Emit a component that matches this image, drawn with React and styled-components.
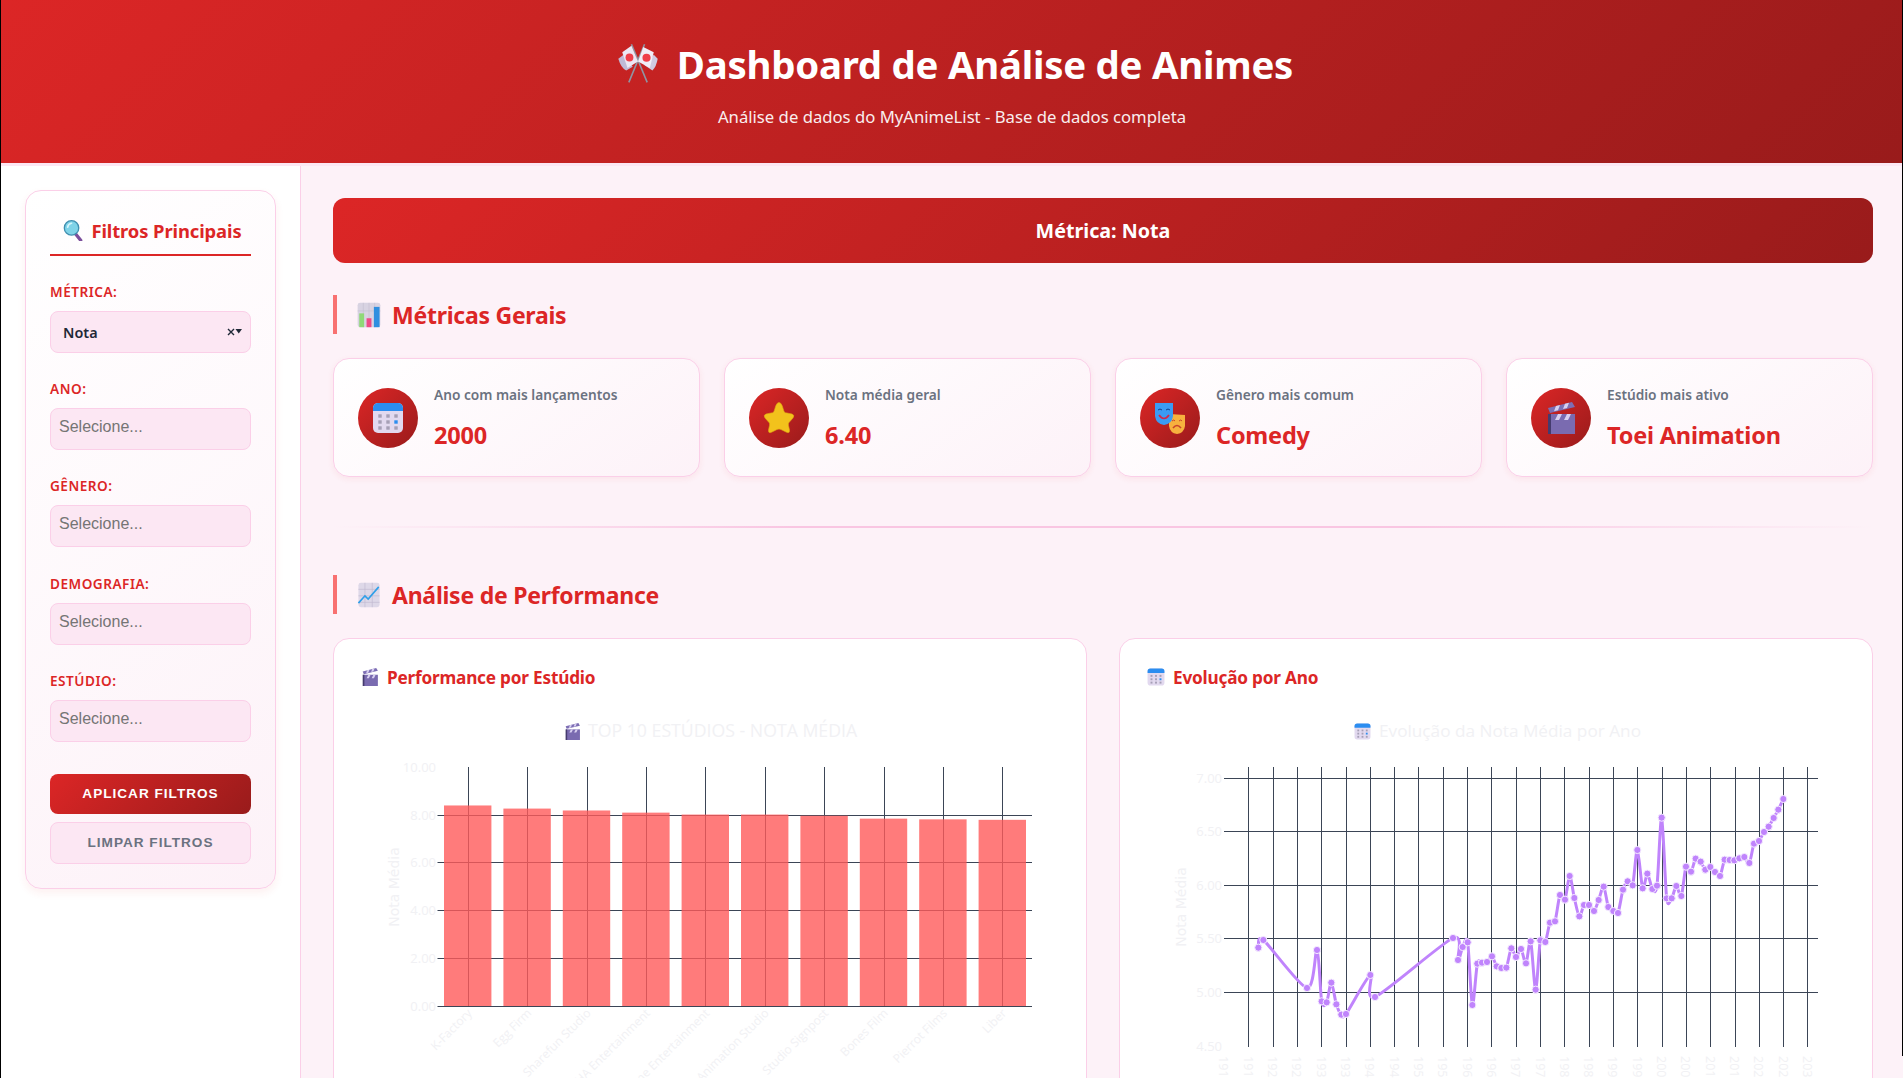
import React from 'react';
import styled, { createGlobalStyle } from 'styled-components';

const GlobalStyle = createGlobalStyle`
    html, body {
        margin: 0;
        padding: 0;
        overflow: hidden;
        background: #fdf2f8;
    }
    body {
        font-family: "Noto Sans", "Open Sans", sans-serif;
    }
    * {
        box-sizing: border-box;
    }
`;

const Page = styled.div`
    position: relative;
    height: 1078px;
    overflow: hidden;
    padding-left: 1px;
`;

const Edge = styled.div`
    position: absolute;
    top: 0;
    ${props => props.$side}: 0;
    width: 1px;
    height: ${props => props.$length}px;
    background: #000;
    z-index: 5;
`;

const Header = styled.header`
    height: 166px;
    padding-top: 37px;
    text-align: center;
    color: #fff;
    background: linear-gradient(135deg, #dc2626, #991b1b);
    border-bottom: 3px solid #fce7f3;
`;

const HeaderTitle = styled.h1`
    display: flex;
    justify-content: center;
    align-items: center;
    gap: 18px;
    margin: 0;
    height: 54px;
    padding-left: 6px;
    font-size: 38.4px;
    font-weight: 700;
    letter-spacing: -0.25px;
`;

const HeaderSub = styled.p`
    margin: 14px 0 0;
    font-size: 16.7px;
    line-height: 24px;
    opacity: 0.92;
`;

const Body = styled.div`
    display: flex;
    height: 912px;
`;

const Sidebar = styled.aside`
    width: 300px;
    flex: none;
    padding: 24px;
    background: #fff;
    border-right: 1px solid #fbcfe8;
`;

const FilterCard = styled.div`
    height: 699px;
    padding: 24px;
    border: 1px solid #fbcfe8;
    border-radius: 16px;
    background: linear-gradient(145deg, #fff, #fdf2f8);
    box-shadow: 0 4px 8px rgba(220, 38, 38, 0.07);
`;

const FilterTitle = styled.h3`
    display: flex;
    justify-content: center;
    align-items: center;
    gap: 7px;
    margin: 0 0 26px;
    height: 41px;
    padding: 0 0 8px 4px;
    font-size: 18.4px;
    font-weight: 700;
    letter-spacing: -0.1px;
    color: #dc2626;
    border-bottom: 2px solid #dc2626;
`;

const Field = styled.div`
    margin-bottom: 26.2px;
`;

const FieldLabel = styled.label`
    display: block;
    margin-bottom: 10px;
    font-size: 13.6px;
    line-height: 19px;
    font-weight: 600;
    letter-spacing: 0.5px;
    text-transform: uppercase;
    color: #dc2626;
`;

const Select = styled.div`
    display: flex;
    align-items: center;
    justify-content: ${props => (props.$value ? 'space-between' : 'flex-start')};
    height: 42px;
    padding: ${props => (props.$value ? '0 7px 0 12px' : '0 8px 4px')};
    border: 1px solid #fbcfe8;
    border-radius: 8px;
    background: #fce7f3;
`;

const SelectValue = styled.span`
    font-size: 14.4px;
    font-weight: 600;
    color: #1f2937;
`;

const Placeholder = styled.span`
    font-family: "Liberation Sans", Arial, sans-serif;
    font-size: 16px;
    color: #757575;
`;

const Button = styled.button`
    display: block;
    width: 100%;
    height: ${props => (props.$primary ? 40 : 42)}px;
    margin-top: ${props => (props.$primary ? 32 : 8)}px;
    border: ${props => (props.$primary ? 'none' : '1px solid #fbcfe8')};
    border-radius: 8px;
    font-family: "Liberation Sans", Arial, sans-serif;
    font-size: 13.6px;
    font-weight: 700;
    letter-spacing: 1px;
    text-transform: uppercase;
    color: ${props => (props.$primary ? '#fff' : '#6b7280')};
    background: ${props => (props.$primary ? 'linear-gradient(135deg, #dc2626, #991b1b)' : '#fce7f3')};
`;

const Main = styled.main`
    flex: 1;
    min-width: 0;
    padding: 32px 30px 0 32px;
    background: #fdf2f8;
`;

const Banner = styled.div`
    display: flex;
    align-items: center;
    justify-content: center;
    height: 65px;
    margin-bottom: 32px;
    border-radius: 12px;
    font-size: 19.7px;
    font-weight: 700;
    color: #fff;
    background: linear-gradient(135deg, #dc2626, #991b1b);
`;

const SectionTitle = styled.h2`
    display: flex;
    align-items: center;
    gap: 10px;
    height: 39px;
    margin: 0 0 ${props => props.$after}px;
    padding-left: 19px;
    border-left: 4px solid #f87171;
    font-size: 23px;
    font-weight: 700;
    letter-spacing: -0.25px;
    color: #dc2626;
`;

const MetricGrid = styled.div`
    display: grid;
    grid-template-columns: repeat(4, 1fr);
    gap: 24px;
`;

const MetricCard = styled.div`
    display: flex;
    align-items: center;
    gap: 16px;
    height: 119px;
    padding: 0 24px;
    border: 1px solid #fbcfe8;
    border-radius: 16px;
    background: linear-gradient(145deg, #fff, #fdf2f8);
    box-shadow: 0 2px 6px rgba(220, 38, 38, 0.07);
`;

const MetricIcon = styled.div`
    display: flex;
    align-items: center;
    justify-content: center;
    flex: none;
    width: 60px;
    height: 60px;
    border-radius: 50%;
    background: linear-gradient(135deg, #dc2626, #991b1b);
`;

const MetricText = styled.div`
    display: flex;
    flex-direction: column;
    margin-top: 2px;
`;

const MetricLabel = styled.span`
    font-size: 13.7px;
    line-height: 18px;
    font-weight: 600;
    color: #6b7280;
`;

const MetricValue = styled.span`
    margin-top: 15px;
    font-size: 23.5px;
    line-height: 32px;
    font-weight: 700;
    letter-spacing: -0.2px;
    color: #dc2626;
`;

const Divider = styled.div`
    height: 2px;
    margin: 49px 0 47px;
    background: linear-gradient(90deg, transparent, #f9c6e2 30%, #f9c6e2 70%, transparent);
`;

const ChartGrid = styled.div`
    display: grid;
    grid-template-columns: 1fr 1fr;
    gap: 32px;
`;

const ChartCard = styled.section`
    height: 620px;
    padding: 24px;
    border: 1px solid #fbcfe8;
    border-radius: 16px;
    background: #fff;
`;

const ChartTitle = styled.h3`
    display: flex;
    align-items: center;
    gap: 8px;
    height: 28px;
    margin: 0 0 14px;
    padding-left: 3px;
    font-size: 17.2px;
    font-weight: 700;
    letter-spacing: -0.2px;
    color: #dc2626;
`;

const ChartSvg = styled.svg`
    display: block;
    width: 704px;
    height: 450px;
    overflow: hidden;
    font-family: "Open Sans", sans-serif;
`;

const Glyph = ({ size, children, x, y }) => (
    <svg width={size} height={size} x={x} y={y} viewBox="0 0 32 32">{children}</svg>
);

const FlagsEmoji = ({ size }) => (
    <Glyph size={size}>
        <path d="M21 1 L9 30" stroke="#8f95a3" strokeWidth="1.2" />
        <path d="M11 1 L23 30" stroke="#8f95a3" strokeWidth="1.2" />
        <path d="M1 12 L5 9 L12 18 L7 21 Q3 19 1 12Z" fill="#bfb9d6" />
        <path d="M4 7 L11 2 L16 14 L8 19Z" fill="#ece7f4" />
        <circle cx="9.5" cy="11" r="3" fill="#ef3f4a" />
        <path d="M31 12 L28 9 L21 17 L27 21 Q30 18 31 12Z" fill="#cfc9e0" />
        <path d="M20 3 L28 7 L25 19 L16 14Z" fill="#f1edf7" />
        <circle cx="22.5" cy="11.2" r="3.1" fill="#ef3f4a" />
    </Glyph>
);

const SearchEmoji = ({ size }) => (
    <Glyph size={size}>
        <path d="M19 21 L27 31" stroke="#7b4f9c" strokeWidth="5" strokeLinecap="round" />
        <circle cx="13" cy="12" r="11" fill="#7fd3e8" stroke="#3f8fb0" strokeWidth="2" />
        <path d="M7 11 Q8 6 13 5" stroke="#d6f4fb" strokeWidth="2.5" fill="none" strokeLinecap="round" />
    </Glyph>
);

const BarsEmoji = ({ size }) => (
    <Glyph size={size}>
        <rect x="2" y="1" width="28" height="30" rx="3" fill="#d8d3e2" />
        <path d="M2 11H30M16 1V31M9 1V31M23 1V31" stroke="#c3bdd0" strokeWidth="0.7" />
        <rect x="4" y="14" width="6" height="17" fill="#8fd977" />
        <rect x="13" y="20" width="6" height="11" fill="#ef4a85" />
        <rect x="22" y="6" width="7" height="25" fill="#2f8fe0" />
    </Glyph>
);

const CalendarEmoji = ({ size, x, y }) => (
    <Glyph size={size} x={x} y={y}>
        <rect x="1" y="1" width="30" height="30" rx="5" fill="#e2d9ef" />
        <path d="M1 9 V6 a5 5 0 0 1 5 -5 h20 a5 5 0 0 1 5 5 v3Z" fill="#2b8df0" />
        {[8, 16, 24].map(cx => [14, 20, 26].map(cy => (
            <rect key={`${cx}-${cy}`} x={cx - 1.7} y={cy - 1.7} width="3.4" height="3.4" fill={cx === 24 && cy === 20 ? '#2b8df0' : '#a69fb6'} />
        )))}
    </Glyph>
);

const StarEmoji = ({ size }) => (
    <Glyph size={size}>
        <path d="M16 0.5 Q18 0.5 19.3 4 L21 9.5 Q22 11 24 11 L29 12 Q32 13 30 16 L26 20.5 Q25 21.5 25.5 23.5 L26.5 28 Q27 32 23 30 L18 27.5 Q16 26.5 14 27.5 L9 30 Q5 32 5.5 28 L6.5 23.5 Q7 21.5 6 20.5 L2 16 Q0 13 3 12 L8 11 Q10 11 11 9.5 L12.7 4 Q14 0.5 16 0.5Z" fill="#f2c21c" stroke="#dfa810" strokeWidth="0.6" />
    </Glyph>
);

const MasksEmoji = ({ size }) => (
    <Glyph size={size}>
        <path d="M15 12 L31 13 V24 Q30 31 23 32 Q16 31 15 24Z" fill="#f7b13e" />
        <path d="M19 26 Q23 21 27 26" stroke="#c8442b" strokeWidth="1.6" fill="none" />
        <path d="M18 19 Q20 17 21 19 M25 19 Q27 17 28 19" stroke="#c8442b" strokeWidth="1" fill="none" />
        <path d="M1 1 L19 1 L19 14 Q18 22 10 23 Q2 22 1 14Z" fill="#3a9bf4" />
        <path d="M5 13 Q10 20 15 13" stroke="#d3274a" strokeWidth="1.7" fill="none" />
        <path d="M4 8 Q6 6 8 8 M12 8 Q14 6 16 8" stroke="#123c8c" strokeWidth="1" fill="none" />
    </Glyph>
);

const ClapperEmoji = ({ size, x, y }) => (
    <Glyph size={size} x={x} y={y}>
        <rect x="4" y="12" width="26" height="20" fill="#7a6bb0" />
        <rect x="3" y="12" width="3" height="20" fill="#453b6e" />
        <path d="M10 18 L13 12 H17 L14 18Z M19 18 L22 12 H26 L23 18Z" fill="#d8d0f0" />
        <path d="M3 6 L27 0 L30 5 L5 11Z" fill="#7d6eb4" />
        <path d="M9 9.3 L11 4 L15 3 L13 8.3Z M18 7 L20 1.7 L24 0.8 L22 6Z" fill="#d8d0f0" />
    </Glyph>
);

const TrendEmoji = ({ size }) => (
    <Glyph size={size}>
        <rect x="3" y="1" width="26" height="30" rx="3" fill="#ded8e8" />
        <path d="M3 9H29M3 17H29M3 25H29M11 1V31M20 1V31" stroke="#bfb8cf" strokeWidth="0.8" />
        <path d="M3 26 L11 17 L15 21 L28 6" stroke="#2f9fe8" strokeWidth="2" fill="none" />
    </Glyph>
);

const SelectArrows = () => (
    <svg width="16" height="10" viewBox="0 0 16 10">
        <path d="M1 2 L7 8 M7 2 L1 8" stroke="#1f2937" strokeWidth="1.4" />
        <path d="M8.5 2 H15 L11.75 6.5Z" fill="#1f2937" />
    </svg>
);

const crisp = value => Math.round(value) + 0.5;

const studios = [
    ['K-Factory', 8.38], ['Egg Firm', 8.25], ['Sharefun Studio', 8.17], ['ASAHA Entertainment', 8.08],
    ['Kaname Entertainment', 8.0], ['Kyoto Animation Studio', 8.0], ['Studio Signpost', 7.95],
    ['Bones Film', 7.83], ['Pierrot Films', 7.8], ['Liber', 7.78]
];

const barY = value => 1006 - value * 23.93;
const barX = index => 467.7 + index * 59.4;

const StudioChart = () => (
    <ChartSvg viewBox="358 705 704 450">
        <ClapperEmoji size={17} x={564} y={723} />
        <text x="588" y="737" fontSize="17.7" fill="#f1f1f4">TOP 10 ESTÚDIOS - NOTA MÉDIA</text>
        <text transform="translate(399 887) rotate(-90)" textAnchor="middle" fontSize="14" fontFamily="DejaVu Sans" fill="#f1f1f4">Nota Média</text>
        {[0, 2, 4, 6, 8, 10].map(tick => (
            <g key={tick}>
                {tick !== 10 && <line x1="437.5" x2="1032" y1={crisp(barY(tick))} y2={crisp(barY(tick))} stroke="#3b4556" />}
                <text x="436" y={barY(tick) + 5} textAnchor="end" fontSize="13" fill="#f1f1f4">{tick.toFixed(2)}</text>
            </g>
        ))}
        {studios.map((studio, index) => (
            <g key={studio[0]}>
                <line x1={crisp(barX(index))} x2={crisp(barX(index))} y1="767" y2="1006" stroke="#3b4556" />
                <rect x={barX(index) - 23.7} y={barY(studio[1])} width="47.4" height={1006 - barY(studio[1])} fill="#ff5a5a" fillOpacity="0.8" />
                <text transform={`translate(${barX(index) + 5} 1014) rotate(-45)`} textAnchor="end" fontSize="12" fill="#f1f1f4">{studio[0]}</text>
            </g>
        ))}
    </ChartSvg>
);

const rawPoints = [
    [55, 563], [70, 540], [201, 684], [231, 570], [245, 724], [260, 727], [274, 668], [289, 733], [304, 764], [318, 762],
    [391, 645], [405, 711], [639, 534], [654, 600], [668, 561], [683, 547], [697, 735], [712, 611], [726, 608], [741, 606],
    [756, 589], [770, 619], [784, 624], [799, 623], [814, 565], [828, 591], [843, 567], [858, 610], [872, 544], [887, 689],
    [901, 541], [916, 546], [930, 488], [945, 484], [960, 405], [975, 419], [989, 348], [1003, 414], [1018, 469], [1032, 435],
    [1047, 435], [1062, 453], [1076, 420], [1091, 380], [1105, 441], [1120, 453], [1134, 459], [1149, 389], [1163, 364], [1178, 376],
    [1192, 270]
].map(([x, y]) => [1240 + x / 3, 760 + y / 3]).concat([
    [248, 385], [262, 341], [277, 387], [291, 377], [305, 173], [320, 415], [335, 415], [349, 378], [364, 408], [378, 320],
    [393, 335], [407, 296], [422, 305], [436, 329], [451, 321], [465, 336], [480, 348], [494, 299], [509, 300], [523, 301],
    [538, 295], [553, 291], [568, 309], [582, 251], [597, 243], [612, 216], [626, 200], [641, 174], [655, 149], [670, 117]
].map(([x, y]) => [1560 + x / 3, 760 + y / 3]));

const splinePath = points => points.reduce((path, point, i) => {
    if (i === 0) return `M${point[0]} ${point[1]}`;
    const before = points[i - 2] || points[i - 1];
    const prev = points[i - 1];
    const next = points[i + 1] || point;
    const k = 0.14;
    return `${path} C${prev[0] + (point[0] - before[0]) * k} ${prev[1] + (point[1] - before[1]) * k} ${point[0] - (next[0] - prev[0]) * k} ${point[1] - (next[1] - prev[1]) * k} ${point[0]} ${point[1]}`;
}, '');

const yearTicks = Array.from({ length: 25 }, (_, i) => 1910 + i * 5);
const yearX = year => 1248.3 + (year - 1915) * 4.862;
const noteY = note => 992 - (note - 5) * 107.2;

const YearChart = () => (
    <ChartSvg viewBox="1144 705 704 450">
        <CalendarEmoji size={17} x={1354} y={723} />
        <text x="1379" y="737" fontSize="17.2" fill="#f1f1f4">Evolução da Nota Média por Ano</text>
        <text transform="translate(1186 907) rotate(-90)" textAnchor="middle" fontSize="14" fontFamily="DejaVu Sans" fill="#f1f1f4">Nota Média</text>
        {[4.5, 5, 5.5, 6, 6.5, 7].map(tick => (
            <g key={tick}>
                {tick !== 4.5 && <line x1="1224" x2="1818" y1={crisp(noteY(tick))} y2={crisp(noteY(tick))} stroke="#3b4556" />}
                <text x="1222" y={noteY(tick) + 5} textAnchor="end" fontSize="13" fill="#f1f1f4">{tick.toFixed(2)}</text>
            </g>
        ))}
        {yearTicks.map(year => (
            <g key={year}>
                {year !== 1910 && <line x1={crisp(yearX(year))} x2={crisp(yearX(year))} y1="767" y2="1047" stroke="#3b4556" />}
                <text transform={`translate(${yearX(year) - 4.5} 1056) rotate(90)`} fontSize="12.5" fill="#f1f1f4">{year}</text>
            </g>
        ))}
        <path d={splinePath(rawPoints)} fill="none" stroke="#c084fc" strokeWidth="3" />
        {rawPoints.map(point => (
            <circle key={point[0]} cx={point[0]} cy={point[1]} r="3.6" fill="#c084fc" stroke="#f5ecff" strokeWidth="1" />
        ))}
    </ChartSvg>
);

const filters = ['Ano', 'Gênero', 'Demografia', 'Estúdio'];

const metrics = [
    { label: 'Ano com mais lançamentos', value: '2000', Icon: CalendarEmoji },
    { label: 'Nota média geral', value: '6.40', Icon: StarEmoji },
    { label: 'Gênero mais comum', value: 'Comedy', Icon: MasksEmoji },
    { label: 'Estúdio mais ativo', value: 'Toei Animation', Icon: ClapperEmoji }
];

export default function App() {
    return (
        <Page>
            <GlobalStyle />
            <Edge $side="left" $length={1078} />
            <Edge $side="right" $length={1056} />
            <Header>
                <HeaderTitle><FlagsEmoji size={42} />Dashboard de Análise de Animes</HeaderTitle>
                <HeaderSub>Análise de dados do MyAnimeList - Base de dados completa</HeaderSub>
            </Header>
            <Body>
                <Sidebar>
                    <FilterCard>
                        <FilterTitle><SearchEmoji size={21} />Filtros Principais</FilterTitle>
                        <Field>
                            <FieldLabel>Métrica:</FieldLabel>
                            <Select $value>
                                <SelectValue>Nota</SelectValue>
                                <SelectArrows />
                            </Select>
                        </Field>
                        {filters.map(filter => (
                            <Field key={filter}>
                                <FieldLabel>{filter}:</FieldLabel>
                                <Select><Placeholder>Selecione...</Placeholder></Select>
                            </Field>
                        ))}
                        <Button $primary>Aplicar Filtros</Button>
                        <Button>Limpar Filtros</Button>
                    </FilterCard>
                </Sidebar>
                <Main>
                    <Banner>Métrica: Nota</Banner>
                    <SectionTitle $after={24}><BarsEmoji size={26} />Métricas Gerais</SectionTitle>
                    <MetricGrid>
                        {metrics.map(({ label, value, Icon }) => (
                            <MetricCard key={label}>
                                <MetricIcon><Icon size={32} /></MetricIcon>
                                <MetricText>
                                    <MetricLabel>{label}</MetricLabel>
                                    <MetricValue>{value}</MetricValue>
                                </MetricText>
                            </MetricCard>
                        ))}
                    </MetricGrid>
                    <Divider />
                    <SectionTitle $after={24}><TrendEmoji size={26} />Análise de Performance</SectionTitle>
                    <ChartGrid>
                        <ChartCard>
                            <ChartTitle><ClapperEmoji size={18} />Performance por Estúdio</ChartTitle>
                            <StudioChart />
                        </ChartCard>
                        <ChartCard>
                            <ChartTitle><CalendarEmoji size={18} />Evolução por Ano</ChartTitle>
                            <YearChart />
                        </ChartCard>
                    </ChartGrid>
                </Main>
            </Body>
        </Page>
    );
}
